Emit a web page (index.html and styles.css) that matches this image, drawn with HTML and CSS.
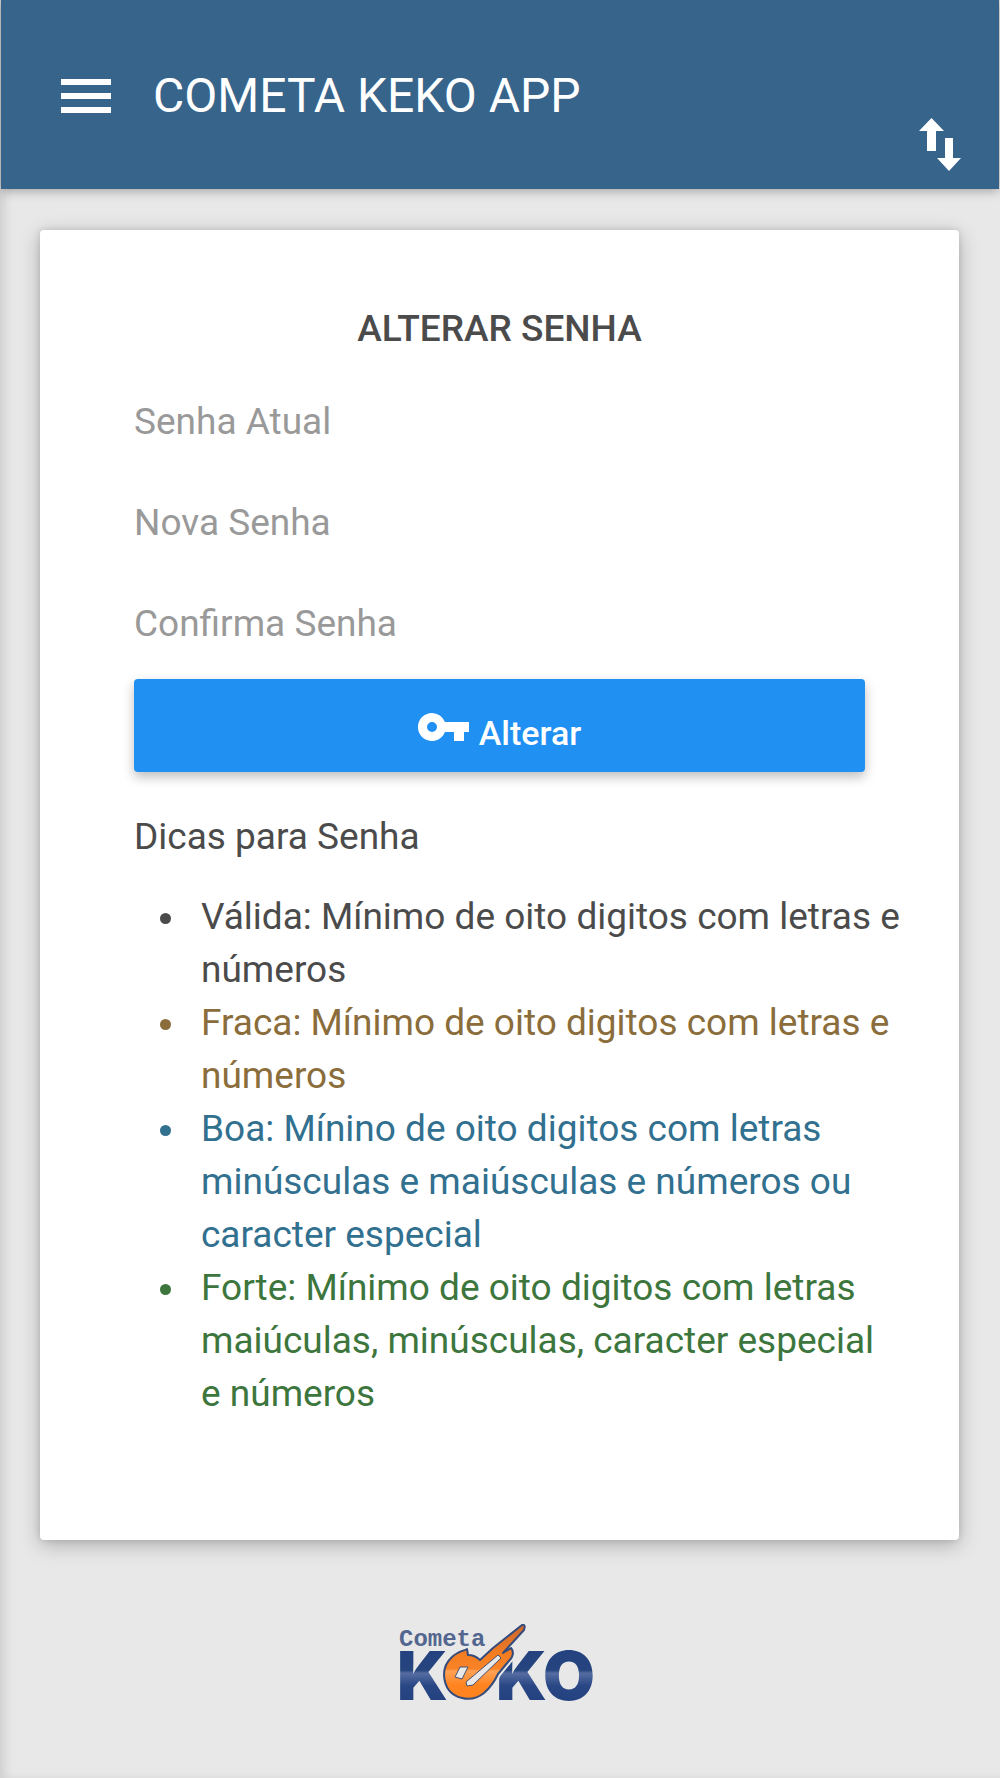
FILE: index.html
```html
<!DOCTYPE html>
<html lang="pt-BR">
<head>
  <meta charset="utf-8">
  <meta name="viewport" content="width=device-width, initial-scale=1">
  <title>Cometa Keko App</title>
  <link rel="stylesheet" href="styles.css">
</head>
<body>
  <header class="app-bar">
    <button class="icon-button menu-button" type="button" aria-label="Menu">
      <svg class="menu-icon" viewBox="0 0 50 34" aria-hidden="true"><path fill="currentColor" d="M0 0h50v6H0zM0 14h50v6H0zM0 28h50v6H0z"/></svg>
    </button>
    <h1 class="app-title">COMETA KEKO APP</h1>
    <button class="icon-button sync-button" type="button" aria-label="Sincronizar">
      <svg class="sync-icon" viewBox="0 0 42 53" aria-hidden="true"><path fill="currentColor" d="M12.500 0 25 13h-8v20H8V13H0zM26 20h8v20h8L30 53 18 40h8z"/></svg>
    </button>
  </header>

  <main class="content">
    <section class="card">
      <form class="form">
        <h2 class="form-title">ALTERAR SENHA</h2>
        <div class="fields">
          <label class="field"><span class="field-label">Senha Atual</span><input class="field-input" type="password" name="atual"></label>
          <label class="field"><span class="field-label">Nova Senha</span><input class="field-input" type="password" name="nova"></label>
          <label class="field"><span class="field-label">Confirma Senha</span><input class="field-input" type="password" name="confirma"></label>
        </div>
        <button class="submit" type="submit">
          <svg class="key-icon" viewBox="0 0 51 28" aria-hidden="true"><path fill="currentColor" fill-rule="evenodd" d="M14 0a14 14 0 0 1 13 9h24v10h-5v9H36v-9h-9A14 14 0 1 1 14 0zm0 9a5 5 0 1 0 0 10 5 5 0 0 0 0-10z"/></svg>
          <span>Alterar</span>
        </button>
      </form>
      <p class="tips-title">Dicas para Senha</p>
      <ul class="tips">
        <li class="tip">Válida: Mínimo de oito digitos com letras e números</li>
        <li class="tip tip-weak">Fraca: Mínimo de oito digitos com letras e números</li>
        <li class="tip tip-good">Boa: Mínino de oito digitos com letras minúsculas e maiúsculas e números ou caracter especial</li>
        <li class="tip tip-strong">Forte: Mínimo de oito digitos com letras maiúculas, minúsculas, caracter especial e números</li>
      </ul>
    </section>
  </main>

  <footer class="footer">
    <svg class="logo" viewBox="0 0 208 96" role="img" aria-label="Cometa Keko">
      <defs>
        <linearGradient id="navy" gradientUnits="userSpaceOnUse" x1="0" y1="28" x2="0" y2="76">
          <stop offset="0" stop-color="#23427f"/><stop offset=".38" stop-color="#26457f"/><stop offset=".44" stop-color="#556da2"/><stop offset=".7" stop-color="#2a4785"/><stop offset="1" stop-color="#23427f"/>
        </linearGradient>
        <linearGradient id="orange" gradientUnits="userSpaceOnUse" x1="0" y1="0" x2="0" y2="76">
          <stop offset="0" stop-color="#c8682f"/><stop offset=".4" stop-color="#f47d22"/><stop offset=".59" stop-color="#f98326"/><stop offset=".62" stop-color="#ffa256"/><stop offset=".8" stop-color="#ff8420"/>
        </linearGradient>
      </defs>
      <text class="logo-small" x="3" y="22">Cometa</text>
      <g class="logo-big" fill="url(#navy)"><text x="1" y="76">K</text><text x="100" y="76">K</text><text x="147" y="76">O</text></g>
      <path fill="url(#orange)" stroke="#e8e8e8" stroke-width="6" stroke-linejoin="round" d="M56 33C62 27 68 27 71 25L72 31Q79 31 84 36L97 24 126 1Q130 0 128 6L107 29 115 24Q120 30 112 38L102 50Q97 61 88 69 78 77 66 74 49 70 48 51 48 40 56 33z"/>
      <path fill="url(#orange)" stroke="#344b7c" stroke-width="2" stroke-linejoin="round" d="M56 33C62 27 68 27 71 25L72 31Q79 31 84 36L97 24 126 1Q130 0 128 6L107 29 115 24Q120 30 112 38L102 50Q97 61 88 69 78 77 66 74 49 70 48 51 48 40 56 33z"/>
      <path fill="#e8e8e8" stroke="#47506f" stroke-width="1" stroke-linejoin="round" d="M59 53 64 43 72 43 66 55zM70 58 102 31 105 34 77 61 71 62z"/>
    </svg>
  </footer>
</body>
</html>
```
FILE: styles.css
```css
* { box-sizing: border-box; }

body {
  margin: 0;
  min-height: 100vh;
  padding: 0 1px;
  background: #e8e8e8;
  box-shadow: inset 7px 0 10px -2px #d0d0d0;
  color: #4b4b4b;
  font: 37px/53px Roboto, sans-serif;
}

button, input { font: inherit; }

.app-bar {
  display: flex;
  align-items: center;
  gap: 42px;
  height: 189px;
  padding: 3px 38px 0 60px;
  background: #37648b;
  color: #fff;
  box-shadow: 0 2px 10px rgba(0, 0, 0, .3);
}

.icon-button {
  display: flex;
  padding: 0;
  border: 0;
  background: none;
  color: inherit;
}

.menu-icon { width: 50px; height: 34px; }
.sync-button { align-self: flex-end; margin: 0 0 18px auto; }
.sync-icon { width: 42px; height: 53px; }

.app-title {
  margin: 0;
  font-size: 48px;
  font-weight: 400;
  line-height: 56px;
}

.content { padding: 41px 40px 0 39px; }

.card {
  padding: 72px 57px 120px 94px;
  border-radius: 4px;
  background: #fff;
  box-shadow: 0 5px 20px rgba(0, 0, 0, .25), 0 0 6px rgba(0, 0, 0, .12);
}

.form { margin-right: 37px; }

.form-title {
  margin: 0 0 32px;
  font-size: 37px;
  font-weight: 500;
  line-height: 53px;
  text-align: center;
}

.fields {
  display: grid;
  gap: 32px;
  margin-bottom: 21px;
}

.field {
  display: grid;
  align-items: center;
  height: 69px;
}

.field-label, .field-input { grid-area: 1 / 1; }
.field-label { color: #999; }

.field-input {
  width: 100%;
  height: 69px;
  padding: 0;
  border: 0;
  outline: 0;
  background: transparent;
}

.submit {
  display: flex;
  align-items: center;
  justify-content: center;
  gap: 10px;
  width: 100%;
  height: 93px;
  padding: 14px 0 0;
  border: 0;
  border-radius: 4px;
  background: #2090f2;
  color: #fff;
  font-size: 34px;
  font-weight: 500;
  line-height: 40px;
  box-shadow: 0 5px 12px rgba(0, 0, 0, .26);
}

.key-icon { width: 51px; height: 28px; margin-bottom: 12px; }

.tips-title { margin: 38px 0 27px; }

.tips {
  margin: 0;
  padding-left: 67px;
  list-style: none;
}

.tip::before {
  content: "";
  display: inline-block;
  width: 11px;
  height: 11px;
  margin: 0 30px 5px -41px;
  border-radius: 50%;
  background: currentColor;
}

.tip-weak { color: #8a6d3b; }
.tip-good { color: #31708f; }
.tip-strong { color: #3c763d; }

.footer {
  display: flex;
  justify-content: center;
  padding: 84px 0 56px;
}

.logo { width: 208px; height: 96px; }

.logo-small {
  fill: #53668f;
  font: 700 24px "Liberation Mono", monospace;
}

.logo-big { font: 900 67px Inter, sans-serif; }
```
